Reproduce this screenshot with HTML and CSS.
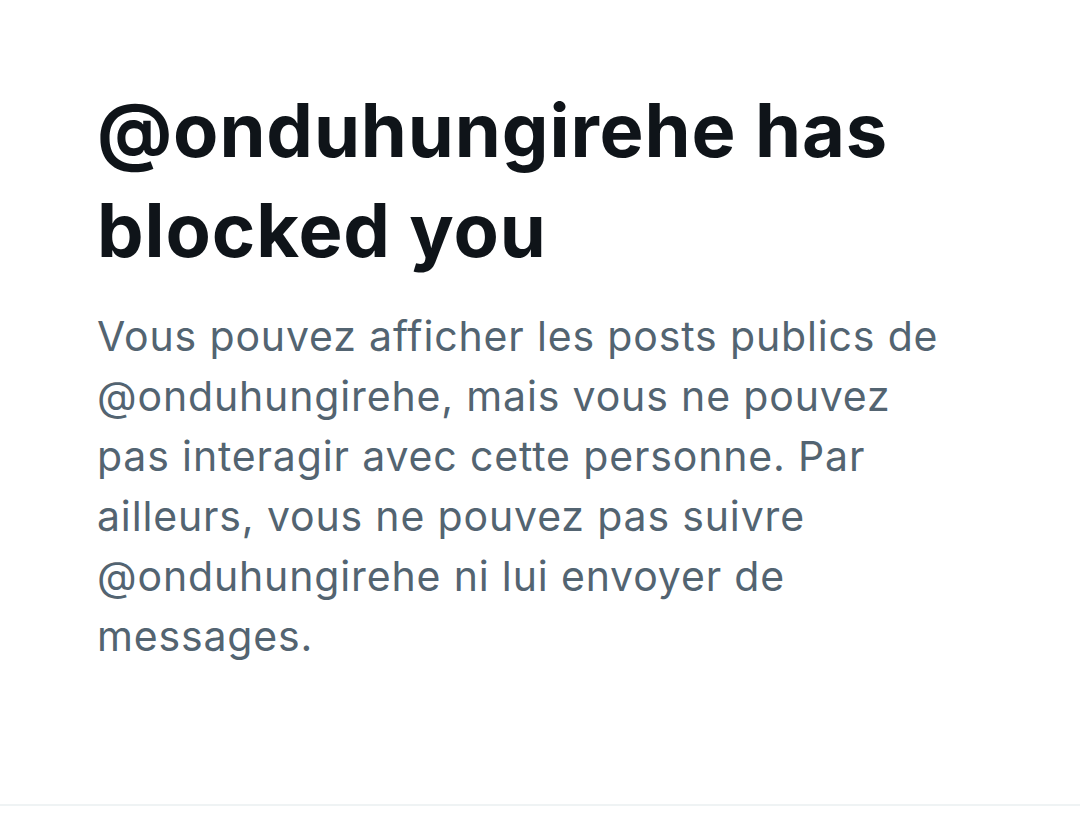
FILE: index.html
```html
<!DOCTYPE html>
<html lang="fr">
<head>
<meta charset="utf-8">
<link rel="stylesheet" href="styles.css">
</head>
<body>
<main class="page">
  <section class="blocked">
    <h1 class="title">@onduhungirehe has<br>blocked you</h1>
    <p class="desc">Vous pouvez afficher les posts publics de<br>@onduhungirehe, mais vous ne pouvez<br>pas interagir avec cette personne. Par<br>ailleurs, vous ne pouvez pas suivre<br>@onduhungirehe ni lui envoyer de<br>messages.</p>
  </section>
  <div class="divider"></div>
</main>
</body>
</html>
```
FILE: styles.css
```css
html, body {
  margin: 0;
  padding: 0;
  background: #ffffff;
}
.page {
  width: 1080px;
  height: 837px;
  display: flex;
  flex-direction: column;
}
.blocked {
  flex: 1;
  padding: 80px 0 0 97px;
}
.title {
  margin: 0;
  font-family: "Inter", "Liberation Sans", sans-serif;
  font-weight: 700;
  font-size: 74px;
  line-height: 100px;
  color: #0f1419;
  letter-spacing: 0.9px;
}
.desc {
  margin: 26px 0 0 0;
  font-family: "Inter", "Liberation Sans", sans-serif;
  font-weight: 400;
  font-size: 41px;
  line-height: 60px;
  color: #536471;
  letter-spacing: 0.85px;
}
.divider {
  height: 2px;
  background: #eff3f4;
  margin-bottom: 31px;
}
```
